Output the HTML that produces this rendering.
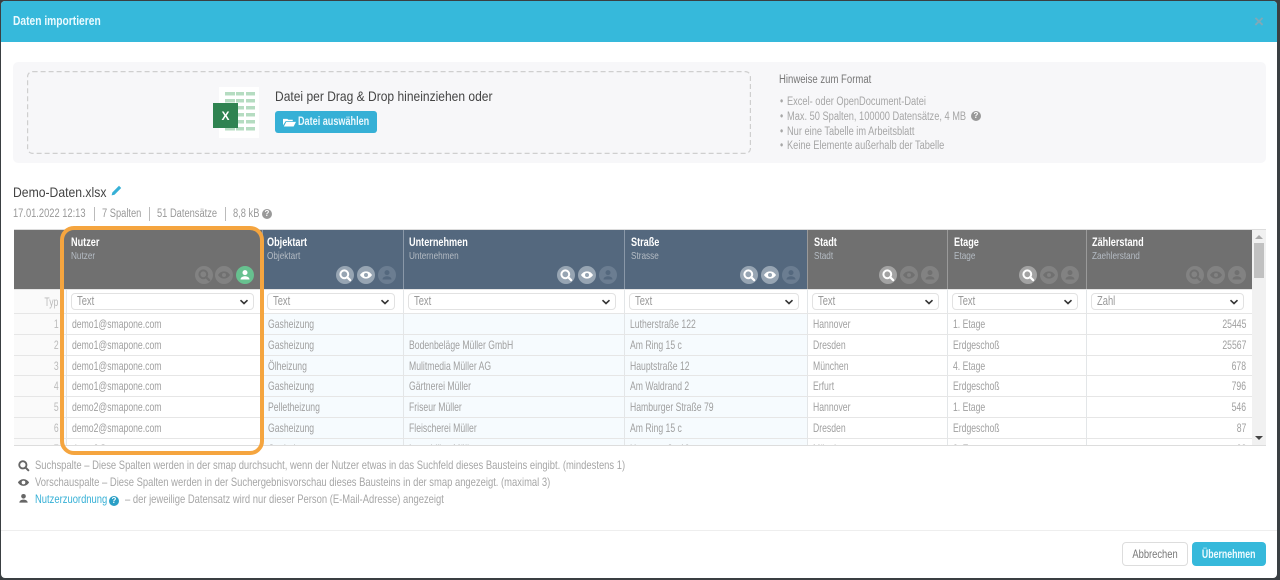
<!DOCTYPE html>
<html lang="de"><head><meta charset="utf-8"><title>Daten importieren</title>
<style>
*{box-sizing:border-box}
html,body{margin:0;padding:0;width:1280px;height:580px;overflow:hidden;background:#3a3f42}
body{font-family:"Liberation Sans",sans-serif;color:#999;position:relative}
.a{position:absolute;white-space:nowrap;transform-origin:left center}
#modal{position:absolute;left:1px;top:1px;width:1276px;height:577px;background:#fff;border-radius:4px;overflow:hidden}
#head{position:absolute;left:1px;top:1px;width:1276px;height:41px;background:#36b9db;border-radius:4px 4px 0 0}
#tbl{position:absolute;left:14px;top:229px;width:1252px;height:217px;overflow:hidden;border-bottom:1px solid #ddd;border-top:1px solid #dcdcdc}
table{position:absolute;left:0;top:59px;border-collapse:collapse;table-layout:fixed;width:1238px;font-size:12px;color:#a0a0a0}
td{padding:0 5px;border:1px solid #e6e6e6;border-left-color:#e3e6e8;border-right-color:#e3e6e8;overflow:hidden;white-space:nowrap;vertical-align:middle;line-height:14px}
td:first-child{border-left:0;background:#fafafa;text-align:right;padding:0 7px 0 0;color:#bbb}
td.b{background:#f6fbfe}
td>span{display:inline-block;transform:scaleX(.72);transform-origin:left center}
td:first-child>span,td.r>span{transform-origin:right center}
tr.t td{height:24px;padding:0 8px 0 4px;background:#fff}
tr.t td:first-child{background:#fafafa;padding:0 7px 0 0}
tr.d td{height:21px}
tr.d.n td{height:20px}
.r{text-align:right}
.sel{height:17px;margin-top:-1px;border:1px solid #e2e2e2;border-radius:4px;background:#fff;padding-left:5px;font-size:12.5px;line-height:15px;color:#999;position:relative}
.sel span{display:inline-block;transform:scaleX(.75);transform-origin:left center}
.sel svg{position:absolute;right:4px;top:5px}
.hc{position:absolute;top:0;height:59px}
.hc b{position:absolute;top:5px;font-size:12px;color:#fff;white-space:nowrap;transform:scaleX(.76);transform-origin:left center}
.hc span{position:absolute;top:19px;font-size:10.5px;color:#b5bcc4;white-space:nowrap;transform:scaleX(.78);transform-origin:left center}
.g{background:#707070}.bl{background:#54687e}
.ic{position:absolute;top:36px;width:18px;height:18px;border-radius:50%}
.ic svg{position:absolute;left:2px;top:2px;width:14px;height:14px}
.ba{background:#97a5b3;color:#fff}.bi{background:#6b7d91;color:#54687e}
.ga{background:#a3a3a3;color:#fff}.gi{background:#828282;color:#707070}
.gr{background:#67c18f;color:#fff}
.l{font-size:12px;color:#a6a6a6;transform:scaleX(.785)}
.h{font-size:11.5px;color:#a6a6a6;transform:scaleX(.805)}
.m{font-size:11.5px;color:#999;transform:scaleX(.81)}
.q{position:absolute;width:10px;height:10px;border-radius:50%;background:#999;color:#fff;font:bold 8px/10px "Liberation Sans",sans-serif;text-align:center}
</style></head><body>
<svg width="0" height="0" style="position:absolute"><defs>
<symbol id="s" viewBox="0 0 14 14"><circle cx="6.3" cy="6.3" r="3.9" fill="none" stroke="currentColor" stroke-width="2"/><path d="M9.2 9.2l3 3" stroke="currentColor" stroke-width="2.2" stroke-linecap="round"/></symbol>
<symbol id="e" viewBox="0 0 14 14"><path fill="currentColor" fill-rule="evenodd" d="M7 3.4C4.3 3.4 2.2 5 1 7c1.200 2 3.300 3.600 6 3.600S11.800 9 13 7c-1.200-2-3.300-3.600-6-3.600zM7 5a2 2 0 1 1 0 4 2 2 0 0 1 0-4z"/></symbol>
<symbol id="p" viewBox="0 0 14 14"><circle cx="7" cy="4.600" r="2.500" fill="currentColor"/><path fill="currentColor" d="M2.500 11.500c0-2.200 2.200-3.300 4.500-3.300s4.500 1.100 4.500 3.300z"/></symbol>
<symbol id="c" viewBox="0 0 10 6"><path d="M1.500 1.200L5 4.500l3.500-3.300" fill="none" stroke="#333" stroke-width="1.600"/></symbol>
</defs></svg>
<div id="modal"></div>
<div id="head"></div>
<div class="a" style="left:13px;top:14px;font-size:12.500px;font-weight:bold;color:#eafaff;transform:scaleX(.82)">Daten importieren</div>
<div class="a" style="left:1254px;top:12px;font-size:17px;font-weight:bold;color:#7fa9b8">×</div>

<div class="a" style="left:13px;top:62px;width:1253px;height:101px;background:#f7f7f9;border-radius:5px"></div>
<svg class="a" style="left:27px;top:71px" width="724" height="83"><rect x=".6" y=".6" width="722.800" height="81.800" rx="5" fill="none" stroke="#cfcfcf" stroke-width="1.200" stroke-dasharray="5 3"/></svg>
<svg class="a" style="left:212px;top:86px" width="48" height="53" viewBox="0 0 48 53">
<rect x="7" y="1" width="40" height="51" fill="#fff"/>
<g fill="#b5dcc1"><rect x="13" y="6" width="10" height="3.500"/><rect x="24" y="6" width="8" height="3.500"/><rect x="34" y="6" width="9" height="3.500"/>
<rect x="13" y="13" width="10" height="3.500"/><rect x="24" y="13" width="8" height="3.500"/><rect x="34" y="13" width="9" height="3.500"/>
<rect x="24" y="20" width="8" height="3.500"/><rect x="34" y="20" width="9" height="3.500"/><rect x="24" y="27" width="8" height="3.500"/><rect x="34" y="27" width="9" height="3.500"/><rect x="24" y="34" width="8" height="3.500"/><rect x="34" y="34" width="9" height="3.500"/><rect x="13" y="41" width="10" height="3.500"/><rect x="24" y="41" width="8" height="3.500"/><rect x="34" y="41" width="9" height="3.500"/></g>
<rect x="1" y="17" width="25" height="25" fill="#2f8351"/>
<text x="13.500" y="34" text-anchor="middle" fill="#fff" font-family="Liberation Sans" font-weight="bold" font-size="12">X</text></svg>
<div class="a" style="left:275px;top:88px;font-size:14px;color:#444;transform:scaleX(.86)">Datei per Drag &amp; Drop hineinziehen oder</div>
<div class="a" style="left:275px;top:111px;width:102px;height:22px;background:#36b0d6;border-radius:3px"></div>
<svg class="a" style="left:283px;top:118px" width="13" height="9" viewBox="0 0 12 10" preserveAspectRatio="none"><path fill="#fff" d="M0 1h4l1 1h4v1.500H2.500L0 8zM3 4.300h9L9.800 9.500H.8z"/></svg>
<div class="a" style="left:298px;top:116px;font-size:11.500px;font-weight:bold;color:#eaf8fd;transform:scaleX(.79)">Datei auswählen</div>

<div class="a" style="left:779px;top:74px;font-size:11.500px;color:#777;transform:scaleX(.83)">Hinweise zum Format</div>
<div class="a h" style="left:780px;top:96px">•</div><div class="a h" style="left:787px;top:96px">Excel- oder OpenDocument-Datei</div>
<div class="a h" style="left:780px;top:111px">•</div><div class="a h" style="left:787px;top:111px">Max. 50 Spalten, 100000 Datensätze, 4 MB</div>
<div class="q" style="left:971px;top:111px">?</div>
<div class="a h" style="left:780px;top:126px">•</div><div class="a h" style="left:787px;top:126px">Nur eine Tabelle im Arbeitsblatt</div>
<div class="a h" style="left:780px;top:140px">•</div><div class="a h" style="left:787px;top:140px">Keine Elemente außerhalb der Tabelle</div>

<div class="a" style="left:13px;top:184px;font-size:14px;color:#444;transform:scaleX(.87)">Demo-Daten.xlsx</div>
<svg class="a" style="left:111px;top:185px" width="11" height="11" viewBox="0 0 11 11"><path fill="#36b0d6" d="M8 .8l2.200 2.200L3.500 9.700.6 10.400l.7-2.900z"/></svg>
<div class="a m" style="left:13px;top:208px">17.01.2022 12:13</div>
<div class="a" style="left:94px;top:207px;width:1px;height:14px;background:#bbb"></div>
<div class="a m" style="left:102px;top:208px">7 Spalten</div>
<div class="a" style="left:149px;top:207px;width:1px;height:14px;background:#bbb"></div>
<div class="a m" style="left:157px;top:208px">51 Datensätze</div>
<div class="a" style="left:225px;top:207px;width:1px;height:14px;background:#bbb"></div>
<div class="a m" style="left:233px;top:208px">8,8 kB</div>
<div class="q" style="left:262px;top:209px">?</div>

<div id="tbl">
<div class="hc g" style="left:0;width:52px;height:60px"></div>
<div class="hc g" style="left:52px;width:196px;height:60px"><b style="left:5px">Nutzer</b><span style="left:5px;top:20px">Nutzer</span>
<div class="ic gi" style="left:129px"><svg><use href="#s"/></svg></div><div class="ic gi" style="left:149px"><svg><use href="#e"/></svg></div><div class="ic gr" style="left:170px"><svg><use href="#p"/></svg></div></div>
<div class="hc bl" style="left:248px;width:141px;height:60px;border-left:1px solid #8a98a8"><b style="left:4px">Objektart</b><span style="left:4px;top:20px">Objektart</span>
<div class="ic ba" style="left:73px"><svg><use href="#s"/></svg></div><div class="ic ba" style="left:94px"><svg><use href="#e"/></svg></div><div class="ic bi" style="left:115px"><svg><use href="#p"/></svg></div></div>
<div class="hc bl" style="left:389px;width:221px;height:60px;border-left:1px solid #8a98a8"><b style="left:5px">Unternehmen</b><span style="left:5px;top:20px">Unternehmen</span>
<div class="ic ba" style="left:153px"><svg><use href="#s"/></svg></div><div class="ic ba" style="left:174px"><svg><use href="#e"/></svg></div><div class="ic bi" style="left:195px"><svg><use href="#p"/></svg></div></div>
<div class="hc bl" style="left:610px;width:183px;height:60px;border-left:1px solid #8a98a8"><b style="left:6px">Straße</b><span style="left:6px;top:20px">Strasse</span>
<div class="ic ba" style="left:115px"><svg><use href="#s"/></svg></div><div class="ic ba" style="left:136px"><svg><use href="#e"/></svg></div><div class="ic bi" style="left:157px"><svg><use href="#p"/></svg></div></div>
<div class="hc g" style="left:793px;width:140px;height:60px;border-left:1px solid #9a9a9a"><b style="left:6px">Stadt</b><span style="left:6px;top:20px">Stadt</span>
<div class="ic ga" style="left:71px"><svg><use href="#s"/></svg></div><div class="ic gi" style="left:92px"><svg><use href="#e"/></svg></div><div class="ic gi" style="left:113px"><svg><use href="#p"/></svg></div></div>
<div class="hc g" style="left:933px;width:139px;height:60px;border-left:1px solid #9a9a9a"><b style="left:6px">Etage</b><span style="left:6px;top:20px">Etage</span>
<div class="ic ga" style="left:71px"><svg><use href="#s"/></svg></div><div class="ic gi" style="left:92px"><svg><use href="#e"/></svg></div><div class="ic gi" style="left:113px"><svg><use href="#p"/></svg></div></div>
<div class="hc g" style="left:1072px;width:166px;height:60px;border-left:1px solid #9a9a9a"><b style="left:5px">Zählerstand</b><span style="left:5px;top:20px">Zaehlerstand</span>
<div class="ic gi" style="left:99px"><svg><use href="#s"/></svg></div><div class="ic gi" style="left:120px"><svg><use href="#e"/></svg></div><div class="ic gi" style="left:141px"><svg><use href="#p"/></svg></div></div>

<table>
<colgroup><col style="width:52px"><col style="width:196px"><col style="width:141px"><col style="width:221px"><col style="width:183px"><col style="width:140px"><col style="width:139px"><col style="width:166px"></colgroup>
<tr class="t"><td><span>Typ</span></td>
<td><div class="sel"><span>Text</span><svg width="10" height="6"><use href="#c"/></svg></div></td>
<td><div class="sel"><span>Text</span><svg width="10" height="6"><use href="#c"/></svg></div></td>
<td><div class="sel"><span>Text</span><svg width="10" height="6"><use href="#c"/></svg></div></td>
<td><div class="sel"><span>Text</span><svg width="10" height="6"><use href="#c"/></svg></div></td>
<td><div class="sel"><span>Text</span><svg width="10" height="6"><use href="#c"/></svg></div></td>
<td><div class="sel"><span>Text</span><svg width="10" height="6"><use href="#c"/></svg></div></td>
<td><div class="sel"><span>Zahl</span><svg width="10" height="6"><use href="#c"/></svg></div></td></tr>
<tr class="d"><td><span>1</span></td><td><span>demo1@smapone.com</span></td><td class="b"><span>Gasheizung</span></td><td class="b"></td><td class="b"><span>Lutherstraße 122</span></td><td><span>Hannover</span></td><td><span>1. Etage</span></td><td class="r"><span>25445</span></td></tr>
<tr class="d"><td><span>2</span></td><td><span>demo1@smapone.com</span></td><td class="b"><span>Gasheizung</span></td><td class="b"><span>Bodenbeläge Müller GmbH</span></td><td class="b"><span>Am Ring 15 c</span></td><td><span>Dresden</span></td><td><span>Erdgeschoß</span></td><td class="r"><span>25567</span></td></tr>
<tr class="d n"><td><span>3</span></td><td><span>demo1@smapone.com</span></td><td class="b"><span>Ölheizung</span></td><td class="b"><span>Mulitmedia Müller AG</span></td><td class="b"><span>Hauptstraße 12</span></td><td><span>München</span></td><td><span>4. Etage</span></td><td class="r"><span>678</span></td></tr>
<tr class="d"><td><span>4</span></td><td><span>demo1@smapone.com</span></td><td class="b"><span>Gasheizung</span></td><td class="b"><span>Gärtnerei Müller</span></td><td class="b"><span>Am Waldrand 2</span></td><td><span>Erfurt</span></td><td><span>Erdgeschoß</span></td><td class="r"><span>796</span></td></tr>
<tr class="d"><td><span>5</span></td><td><span>demo2@smapone.com</span></td><td class="b"><span>Pelletheizung</span></td><td class="b"><span>Friseur Müller</span></td><td class="b"><span>Hamburger Straße 79</span></td><td><span>Hannover</span></td><td><span>1. Etage</span></td><td class="r"><span>546</span></td></tr>
<tr class="d"><td><span>6</span></td><td><span>demo2@smapone.com</span></td><td class="b"><span>Gasheizung</span></td><td class="b"><span>Fleischerei Müller</span></td><td class="b"><span>Am Ring 15 c</span></td><td><span>Dresden</span></td><td><span>Erdgeschoß</span></td><td class="r"><span>87</span></td></tr>
<tr class="d"><td><span>7</span></td><td><span>demo2@smapone.com</span></td><td class="b"><span>Gasheizung</span></td><td class="b"><span>Immobilien Müller</span></td><td class="b"><span>Hauptstraße 10</span></td><td><span>München</span></td><td><span>2. Etage</span></td><td class="r"><span>98</span></td></tr>
</table>
<div class="a" style="left:1238px;top:0;width:14px;height:216px;background:#f1f1f1"></div>
<div class="a" style="left:1240px;top:13px;width:10px;height:35px;background:#c1c1c1"></div>
<svg class="a" style="left:1241px;top:5px" width="8" height="5"><path d="M4 0L8 4H0z" fill="#aaa"/></svg>
<svg class="a" style="left:1241px;top:206px" width="8" height="5"><path d="M0 0h8L4 4z" fill="#444"/></svg>
</div>
<div class="a" style="left:60px;top:226px;width:204px;height:229px;border:4px solid #f5a53f;border-radius:14px"></div>

<svg class="a" style="left:17px;top:459px;color:#666" width="13" height="13"><use href="#s"/></svg>
<svg class="a" style="left:17px;top:476px;color:#666" width="13" height="13"><use href="#e"/></svg>
<svg class="a" style="left:17px;top:492px;color:#666" width="13" height="13"><use href="#p"/></svg>
<div class="a l" style="left:35px;top:458px">Suchspalte – Diese Spalten werden in der smap durchsucht, wenn der Nutzer etwas in das Suchfeld dieses Bausteins eingibt. (mindestens 1)</div>
<div class="a l" style="left:35px;top:475px">Vorschauspalte – Diese Spalten werden in der Suchergebnisvorschau dieses Bausteins in der smap angezeigt. (maximal 3)</div>
<div class="a l" style="left:35px;top:492px;color:#36b0d6">Nutzerzuordnung</div>
<div class="q" style="left:109px;top:496px;background:#2a9fc6">?</div>
<div class="a l" style="left:125px;top:492px">– der jeweilige Datensatz wird nur dieser Person (E-Mail-Adresse) angezeigt</div>

<div class="a" style="left:1px;top:530px;width:1276px;height:1px;background:#eee"></div>
<div class="a" style="left:1122px;top:542px;width:66px;height:24px;border:1px solid #ddd;border-radius:4px;background:#fff;text-align:center;font-size:12px;line-height:22px;color:#777"><span style="display:inline-block;transform:scaleX(.78)">Abbrechen</span></div>
<div class="a" style="left:1192px;top:542px;width:74px;height:24px;border-radius:4px;background:#36b9db;text-align:center;font-size:12px;font-weight:bold;line-height:24px;color:#eefbff"><span style="display:inline-block;transform:scaleX(.73);margin:0 -10px">Übernehmen</span></div>
</body></html>
